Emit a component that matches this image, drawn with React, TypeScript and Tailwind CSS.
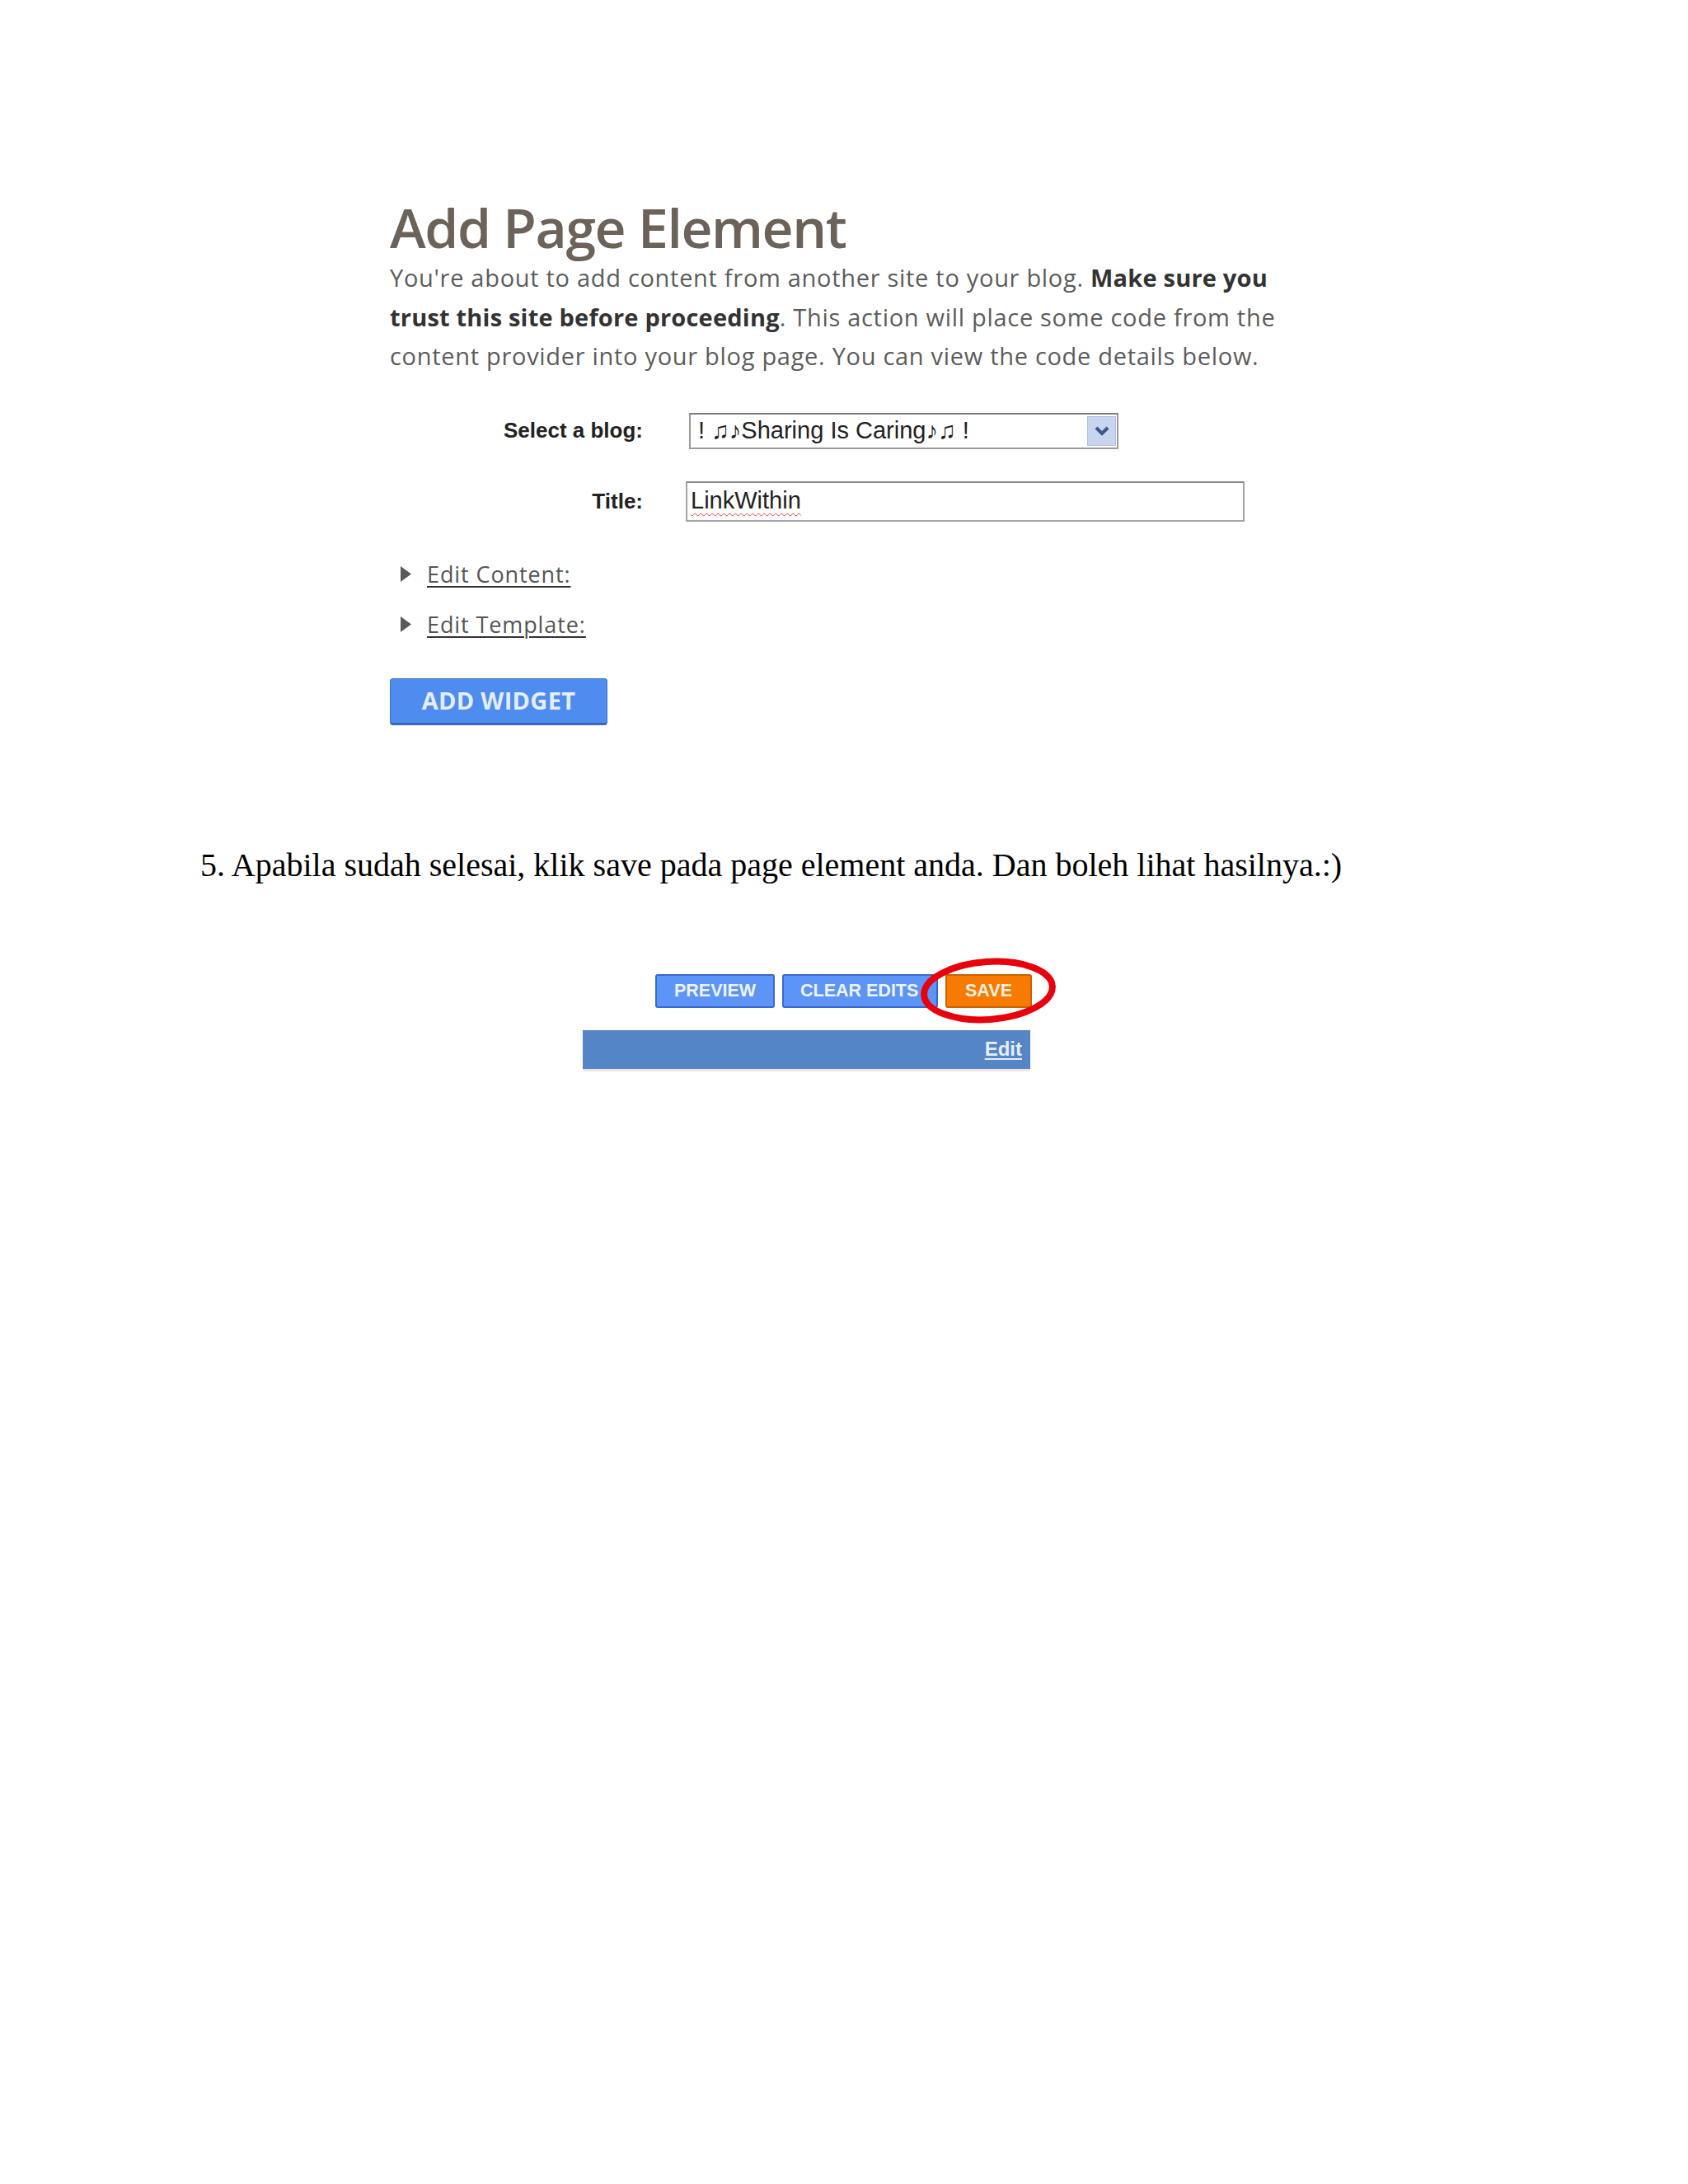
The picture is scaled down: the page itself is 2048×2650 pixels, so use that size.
import React from 'react';

const Triangle = () => (
  <svg width="15" height="19" viewBox="0 0 15 19" className="shrink-0">
    <polygon points="1,0 14,9.5 1,19" fill="#5a5a5a" />
  </svg>
);

const App = () => {
  return (
    <div className="w-[2048px] min-h-[2650px] bg-white pl-[243px]">
      {/* Screenshot 1: Add Page Element */}
      <div className="ml-[230px] w-[1120px] pt-[239px] font-['Open_Sans',sans-serif]">
        <h1 className="text-[66px] leading-[72px] font-semibold text-[#6b625a] tracking-[-1.4px]">
          Add Page Element
        </h1>
        <p className="mt-[2px] text-[29px] leading-[47.5px] text-[#5c5c5c] tracking-[0.7px] whitespace-nowrap">
          You're about to add content from another site to your blog.{' '}
          <span className="font-bold text-[#333] tracking-[0.2px]">Make sure you</span>
          <br />
          <span className="font-bold text-[#333] tracking-[0.2px]">trust this site before proceeding</span>. This action will place some code from the
          <br />
          content provider into your blog page. You can view the code details below.
        </p>

        <div className="mt-[45px] flex items-center h-[44px]">
          <div className="w-[307px] text-right font-['Liberation_Sans',sans-serif] font-bold text-[26px] text-[#222]">
            Select a blog:
          </div>
          <div className="ml-[56px] w-[521px] h-[44px] border-2 border-[#9a9a9a] border-t-[#7d7d7d] bg-white flex items-center">
            <span className="pl-[9px] flex-1 font-['Liberation_Sans','DejaVu_Sans',sans-serif] text-[29px] text-[#222] whitespace-nowrap">
              ! ♫♪Sharing Is Caring♪♫ !
            </span>
            <div className="w-[35px] h-[36px] mr-[1px] bg-[#c8d5f1] border border-[#aebfe3] flex items-center justify-center">
              <svg width="18" height="12" viewBox="0 0 18 12">
                <polyline points="2,2 9,9 16,2" fill="none" stroke="#3f5688" strokeWidth="4" />
              </svg>
            </div>
          </div>
        </div>

        <div className="mt-[39px] flex items-center h-[49px]">
          <div className="w-[307px] text-right font-['Liberation_Sans',sans-serif] font-bold text-[26px] text-[#222]">
            Title:
          </div>
          <div className="ml-[52px] w-[678px] h-[49px] border-2 border-[#a3a3a3] border-t-[#8a8a8a] bg-white flex items-center">
            <span className="pl-[4px] font-['Liberation_Sans',sans-serif] text-[29px] text-[#222] underline decoration-wavy decoration-[#e04040] decoration-1 underline-offset-[5px]">
              LinkWithin
            </span>
          </div>
        </div>

        <div className="mt-[46px] flex items-center gap-[18px] pl-[12px] h-[36px]">
          <Triangle />
          <span className="text-[27px] leading-[36px] text-[#555] tracking-[0.9px] underline decoration-[#333] decoration-2 underline-offset-[4px]">
            Edit Content:
          </span>
        </div>
        <div className="mt-[25px] flex items-center gap-[18px] pl-[12px] h-[36px]">
          <Triangle />
          <span className="text-[27px] leading-[36px] text-[#555] tracking-[0.9px] underline decoration-[#333] decoration-2 underline-offset-[4px]">
            Edit Template:
          </span>
        </div>

        <button className="mt-[47px] w-[264px] h-[57px] rounded-[4px] bg-[#4f8cf0] border border-[#3d74d2] border-b-[3px] border-b-[#3a68bf] text-[#e4eefc] text-[29px] font-bold tracking-[0.3px] flex items-center justify-center">
          ADD WIDGET
        </button>
      </div>

      {/* Step 5 */}
      <p className="mt-[146px] font-['Liberation_Serif',serif] text-[40px] leading-[48px] text-black whitespace-nowrap">
        5. Apabila sudah selesai, klik save pada page element anda. Dan boleh lihat hasilnya.:)
      </p>

      {/* Screenshot 2: save buttons */}
      <div className="ml-[464px] w-[543px] mt-[108px]">
        <div className="relative flex justify-end gap-[9px] font-['Liberation_Sans',sans-serif] font-bold text-[21.5px]">
          <div className="w-[145px] h-[41px] rounded-[3px] bg-[#5c95f6] border-2 border-[#3b68cf] text-[#eef3ff] flex items-center justify-center">
            PREVIEW
          </div>
          <div className="w-[189px] h-[41px] rounded-[3px] bg-[#5c95f6] border-2 border-[#3b68cf] text-[#eef3ff] flex items-center justify-start pl-[20px] whitespace-nowrap">
            CLEAR EDITS
          </div>
          <div className="w-[105px] h-[41px] rounded-[3px] bg-[#f87a00] border-2 border-[#c96300] text-[#fff1e0] flex items-center justify-center mr-[-2px]">
            SAVE
          </div>
          <svg
            className="absolute left-[407px] top-[-21px]"
            width="170"
            height="82"
            viewBox="0 0 170 82"
          >
            <ellipse
              cx="85"
              cy="41"
              rx="78"
              ry="35"
              fill="none"
              stroke="#e8000c"
              strokeWidth="8"
              transform="rotate(-4 85 41)"
            />
          </svg>
        </div>
        <div className="mt-[27px] h-[50px] bg-[#5485c7] border-b-[3px] border-[#efe7da] flex items-center justify-end pr-[10px]">
          <span className="font-['Liberation_Sans',sans-serif] font-bold text-[24px] text-[#e6eefa] underline underline-offset-[3px]">
            Edit
          </span>
        </div>
      </div>
    </div>
  );
};

export default App;
